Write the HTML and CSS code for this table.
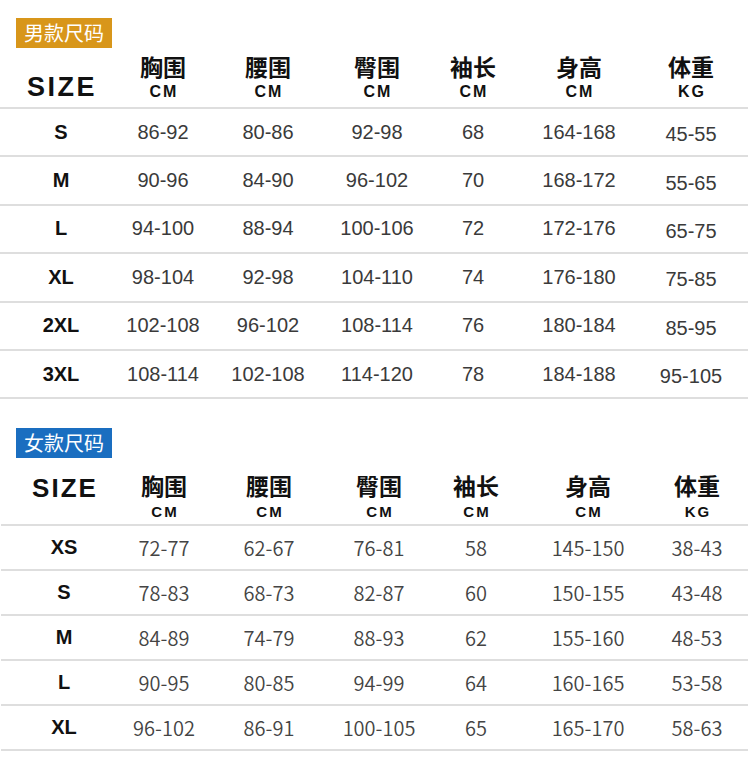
FILE: index.html
```html
<!DOCTYPE html>
<html lang="zh-CN">
<head>
<meta charset="utf-8">
<title>尺码表</title>
<link rel="stylesheet" href="styles.css">
</head>
<body>
<div class="page">
  <section class="section men">
    <div class="badge badge-gold">男款尺码</div>
    <div class="table">
      <div class="row head">
        <div class="size-title">SIZE</div>
        <div class="hcell"><span class="zh">胸围</span><span class="unit">CM</span></div>
        <div class="hcell"><span class="zh">腰围</span><span class="unit">CM</span></div>
        <div class="hcell"><span class="zh">臀围</span><span class="unit">CM</span></div>
        <div class="hcell"><span class="zh">袖长</span><span class="unit">CM</span></div>
        <div class="hcell"><span class="zh">身高</span><span class="unit">CM</span></div>
        <div class="hcell"><span class="zh">体重</span><span class="unit">KG</span></div>
      </div>
      <div class="row body"><div class="sz">S</div><div>86-92</div><div>80-86</div><div>92-98</div><div>68</div><div>164-168</div><div class="low">45-55</div></div>
      <div class="row body"><div class="sz">M</div><div>90-96</div><div>84-90</div><div>96-102</div><div>70</div><div>168-172</div><div class="low">55-65</div></div>
      <div class="row body"><div class="sz">L</div><div>94-100</div><div>88-94</div><div>100-106</div><div>72</div><div>172-176</div><div class="low">65-75</div></div>
      <div class="row body"><div class="sz">XL</div><div>98-104</div><div>92-98</div><div>104-110</div><div>74</div><div>176-180</div><div class="low">75-85</div></div>
      <div class="row body"><div class="sz">2XL</div><div>102-108</div><div>96-102</div><div>108-114</div><div>76</div><div>180-184</div><div class="low">85-95</div></div>
      <div class="row body"><div class="sz">3XL</div><div>108-114</div><div>102-108</div><div>114-120</div><div>78</div><div>184-188</div><div class="low">95-105</div></div>
    </div>
  </section>

  <section class="section women">
    <div class="badge badge-blue">女款尺码</div>
    <div class="table">
      <div class="row head">
        <div class="size-title">SIZE</div>
        <div class="hcell"><span class="zh">胸围</span><span class="unit">CM</span></div>
        <div class="hcell"><span class="zh">腰围</span><span class="unit">CM</span></div>
        <div class="hcell"><span class="zh">臀围</span><span class="unit">CM</span></div>
        <div class="hcell"><span class="zh">袖长</span><span class="unit">CM</span></div>
        <div class="hcell"><span class="zh">身高</span><span class="unit">CM</span></div>
        <div class="hcell"><span class="zh">体重</span><span class="unit">KG</span></div>
      </div>
      <div class="row body"><div class="sz">XS</div><div>72-77</div><div>62-67</div><div>76-81</div><div>58</div><div>145-150</div><div>38-43</div></div>
      <div class="row body"><div class="sz">S</div><div>78-83</div><div>68-73</div><div>82-87</div><div>60</div><div>150-155</div><div>43-48</div></div>
      <div class="row body"><div class="sz">M</div><div>84-89</div><div>74-79</div><div>88-93</div><div>62</div><div>155-160</div><div>48-53</div></div>
      <div class="row body"><div class="sz">L</div><div>90-95</div><div>80-85</div><div>94-99</div><div>64</div><div>160-165</div><div>53-58</div></div>
      <div class="row body"><div class="sz">XL</div><div>96-102</div><div>86-91</div><div>100-105</div><div>65</div><div>165-170</div><div>58-63</div></div>
    </div>
  </section>
</div>
</body>
</html>
```

FILE: styles.css
```css
html, body {
  margin: 0;
  padding: 0;
  background: #ffffff;
}

body {
  font-family: "Liberation Sans", Arial, "Noto Sans CJK SC", sans-serif;
  color: #222;
}

.page {
  width: 750px;
}

.section {
  display: flex;
  flex-direction: column;
}

.men {
  padding-top: 18px;
}

.women {
  padding-top: 29px;
}

.badge {
  align-self: flex-start;
  margin-left: 16px;
  width: 96px;
  height: 30px;
  display: flex;
  align-items: center;
  justify-content: center;
  color: #ffffff;
  font-family: "Noto Sans CJK SC", sans-serif;
  font-weight: 400;
  font-size: 20px;
  line-height: 30px;
}

.badge-gold {
  background: #d8961a;
}

.badge-blue {
  background: #1a6ec0;
}

.table {
  width: 748px;
  display: flex;
  flex-direction: column;
}

.men .table {
  --cols: 122px 82px 128px 90px 102px 110px 114px;
}

.women .table {
  --cols: 126px 74px 136px 84px 110px 114px 104px;
  margin-left: 1px;
  width: 747px;
}

.row {
  display: grid;
  grid-template-columns: var(--cols);
  box-sizing: border-box;
}

.head {
  border-bottom: 2px solid #dedede;
}

.men .head {
  height: 61px;
  padding-top: 3px;
}

.women .head {
  height: 68px;
  padding-top: 12px;
}

.hcell {
  display: flex;
  flex-direction: column;
  align-items: center;
}

.zh {
  font-family: "Noto Sans CJK SC", sans-serif;
  font-weight: 700;
  font-size: 23px;
  line-height: 30px;
  color: #111;
}

.unit {
  font-family: "Liberation Sans", Arial, sans-serif;
  font-weight: 700;
  font-size: 16px;
  line-height: 18px;
  letter-spacing: 2px;
  padding-left: 2px;
  margin-top: 2px;
  color: #111;
}

.women .unit {
  font-size: 15px;
  margin-top: 3px;
}

.size-title {
  font-family: "Liberation Sans", Arial, sans-serif;
  font-weight: 700;
  font-size: 27px;
  letter-spacing: 2.5px;
  color: #111;
  text-align: center;
  padding-left: 2px;
}

.men .size-title {
  align-self: end;
  line-height: 30px;
  padding-bottom: 5px;
}

.women .size-title {
  align-self: start;
  font-size: 26px;
  letter-spacing: 2px;
  line-height: 30px;
  padding-top: 3px;
}

.body {
  border-bottom: 2px solid #dedede;
  align-items: center;
  text-align: center;
}

.men .body {
  height: 48.4px;
  font-family: "Liberation Sans", Arial, sans-serif;
  font-size: 20px;
  color: #3a3a3a;
}

.men .body .low {
  padding-top: 5px;
}

.women .body {
  height: 45px;
  font-family: "Noto Sans CJK SC", sans-serif;
  font-weight: 350;
  font-size: 20px;
  color: #444;
}

.body .sz {
  font-family: "Liberation Sans", Arial, sans-serif;
  font-weight: 700;
  font-size: 20px;
  color: #111;
}
```
